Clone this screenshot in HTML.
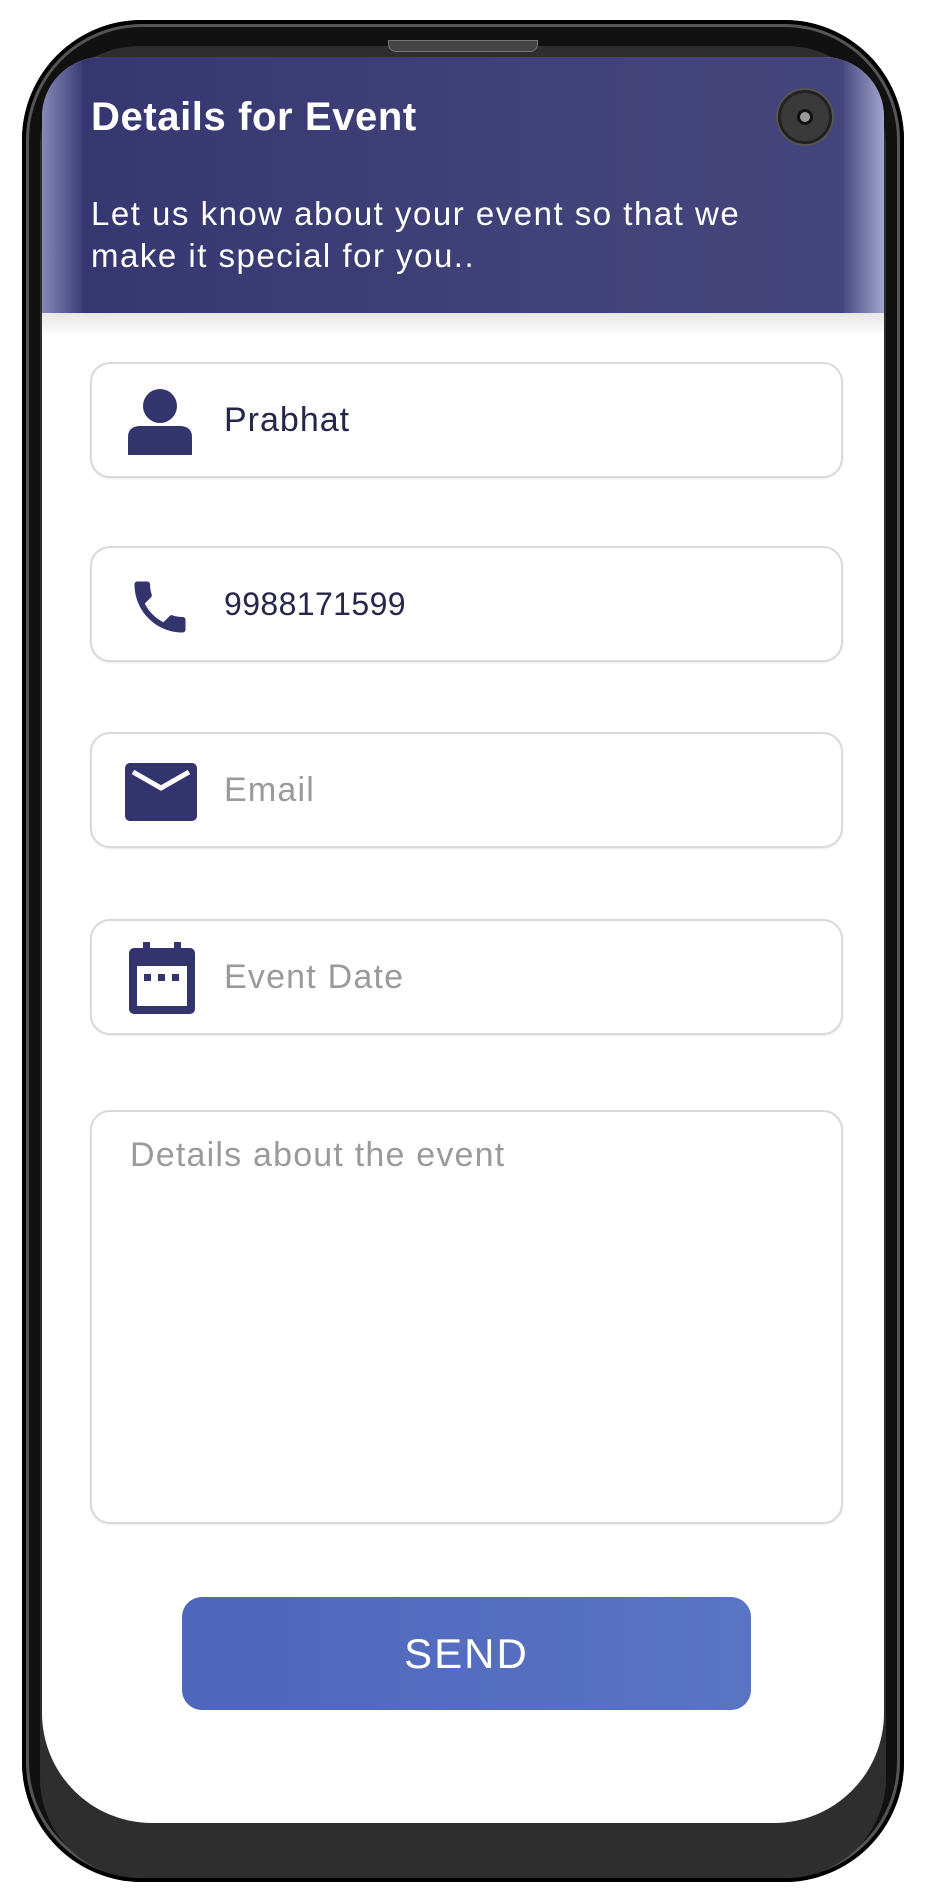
<!DOCTYPE html>
<html><head><meta charset="utf-8"><style>
*{margin:0;padding:0;box-sizing:border-box}
body{width:926px;height:1897px;background:#fff;position:relative;overflow:hidden;font-family:"Liberation Sans",sans-serif}
.a{position:absolute}
.frame{left:22px;top:20px;width:882px;height:1862px;border-radius:120px;background:#111;box-shadow:inset 0 0 0 4px #000,inset 0 0 0 7px #555}
.bez{left:40px;top:46px;width:846px;height:1832px;border-radius:100px;background:#2e2e2e}
.screen{left:42px;top:57px;width:842px;height:1766px;border-radius:60px 60px 110px 110px;background:#fff;overflow:hidden}
.hdr{left:0;top:0;width:842px;height:256px;background:linear-gradient(90deg,#353570,#42427a 60%,#45457c)}
.hdr .l{left:0;top:0;width:40px;height:256px;background:linear-gradient(90deg,rgba(200,205,240,.55),rgba(200,205,240,.05))}
.hdr .r{right:0;top:0;width:40px;height:256px;background:linear-gradient(270deg,rgba(200,205,240,.7),rgba(200,205,240,.05))}
.shadow{left:0;top:256px;width:842px;height:24px;background:linear-gradient(#e6e6e6,#fff)}
.field{left:48px;width:753px;height:116px;border:2px solid #d9d9d9;border-radius:20px;background:#fff;box-shadow:0 1px 2px rgba(0,0,0,.08)}
.txt{position:absolute;left:132px;font-size:34px;letter-spacing:1px;color:#26264a}
.ph{color:#9a9a9a;font-size:34px;letter-spacing:1.2px}
svg{position:absolute}
</style></head><body>
<div class="a frame"></div>
<div class="a bez"></div>
<div class="a" style="left:388px;top:40px;width:150px;height:12px;border-radius:0 0 8px 8px;background:#444;border:1px solid #777"></div>
<div class="a screen">
 <div class="a hdr"><div class="a l"></div><div class="a r"></div></div>
 <div class="a shadow"></div>
 <div class="a" style="left:49px;top:38px;color:#fff;font-weight:bold;font-size:40px;letter-spacing:.6px">Details for Event</div>
 <div class="a" style="left:49px;top:136px;color:#fff;font-size:33px;line-height:42px;letter-spacing:1.5px;width:790px;white-space:nowrap">Let us know about your event so that we<br>make it special for you..</div>
 <div class="a" style="left:736px;top:33px;width:54px;height:54px;border-radius:50%;background:#3a3a3a;border:3px solid #222;box-shadow:0 0 0 2px #555"><div class="a" style="left:16px;top:16px;width:16px;height:16px;border-radius:50%;background:#999;border:3px solid #111"></div></div>

 <div class="a field" style="top:305px"><svg style="left:35px;top:25px" width="66" height="66" viewBox="0 0 66 66"><circle cx="33" cy="17" r="17" fill="#33336e"/><path d="M1 66V48Q1 38 12 37H54Q65 38 65 48V66Z" fill="#33336e"/></svg><div class="txt" style="top:37px">Prabhat</div></div>

 <div class="a field" style="top:489px"><svg style="left:34px;top:25px" width="68" height="68" viewBox="0 0 24 24"><path fill="#33336e" d="M6.62 10.79c1.44 2.83 3.76 5.14 6.59 6.59l2.2-2.2c.27-.27.67-.36 1.02-.24 1.120.37 2.330.57 3.570.57.55 0 1 .45 1 1V20c0 .55-.45 1-1 1-9.39 0-17-7.61-17-17 0-.55.45-1 1-1h3.5c.55 0 1 .45 1 1 0 1.25.2 2.45.57 3.57.11.35.03.74-.25 1.02l-2.2 2.2z"/></svg><div class="txt" style="top:38px;font-size:32px;letter-spacing:.4px">9988171599</div></div>

 <div class="a field" style="top:675px"><svg style="left:33px;top:29px" width="72" height="58" viewBox="0 0 72 58"><rect width="72" height="58" rx="5" fill="#33336e"/><path d="M8 9L36 25L64 9" stroke="#fff" stroke-width="5" fill="none"/></svg><div class="txt ph" style="top:37px">Email</div></div>

 <div class="a field" style="top:862px"><svg style="left:37px;top:21px" width="66" height="72" viewBox="0 0 66 72"><rect x="14" y="0" width="7" height="12" fill="#33336e"/><rect x="45" y="0" width="7" height="12" fill="#33336e"/><rect x="0" y="6" width="66" height="66" rx="5" fill="#33336e"/><rect x="8" y="24" width="50" height="40" fill="#fff"/><rect x="15" y="32" width="7" height="7" fill="#33336e"/><rect x="29" y="32" width="7" height="7" fill="#33336e"/><rect x="43" y="32" width="7" height="7" fill="#33336e"/></svg><div class="txt ph" style="top:37px">Event Date</div></div>

 <div class="a field" style="top:1053px;height:414px"><div class="txt ph" style="left:38px;top:24px">Details about the event</div></div>

 <div class="a" style="left:140px;top:1540px;width:569px;height:113px;border-radius:20px;background:linear-gradient(90deg,#4e66bb,#5a74c4);color:#fff;font-size:42px;letter-spacing:2px;text-align:center;line-height:113px">SEND</div>
</div>
</body></html>
